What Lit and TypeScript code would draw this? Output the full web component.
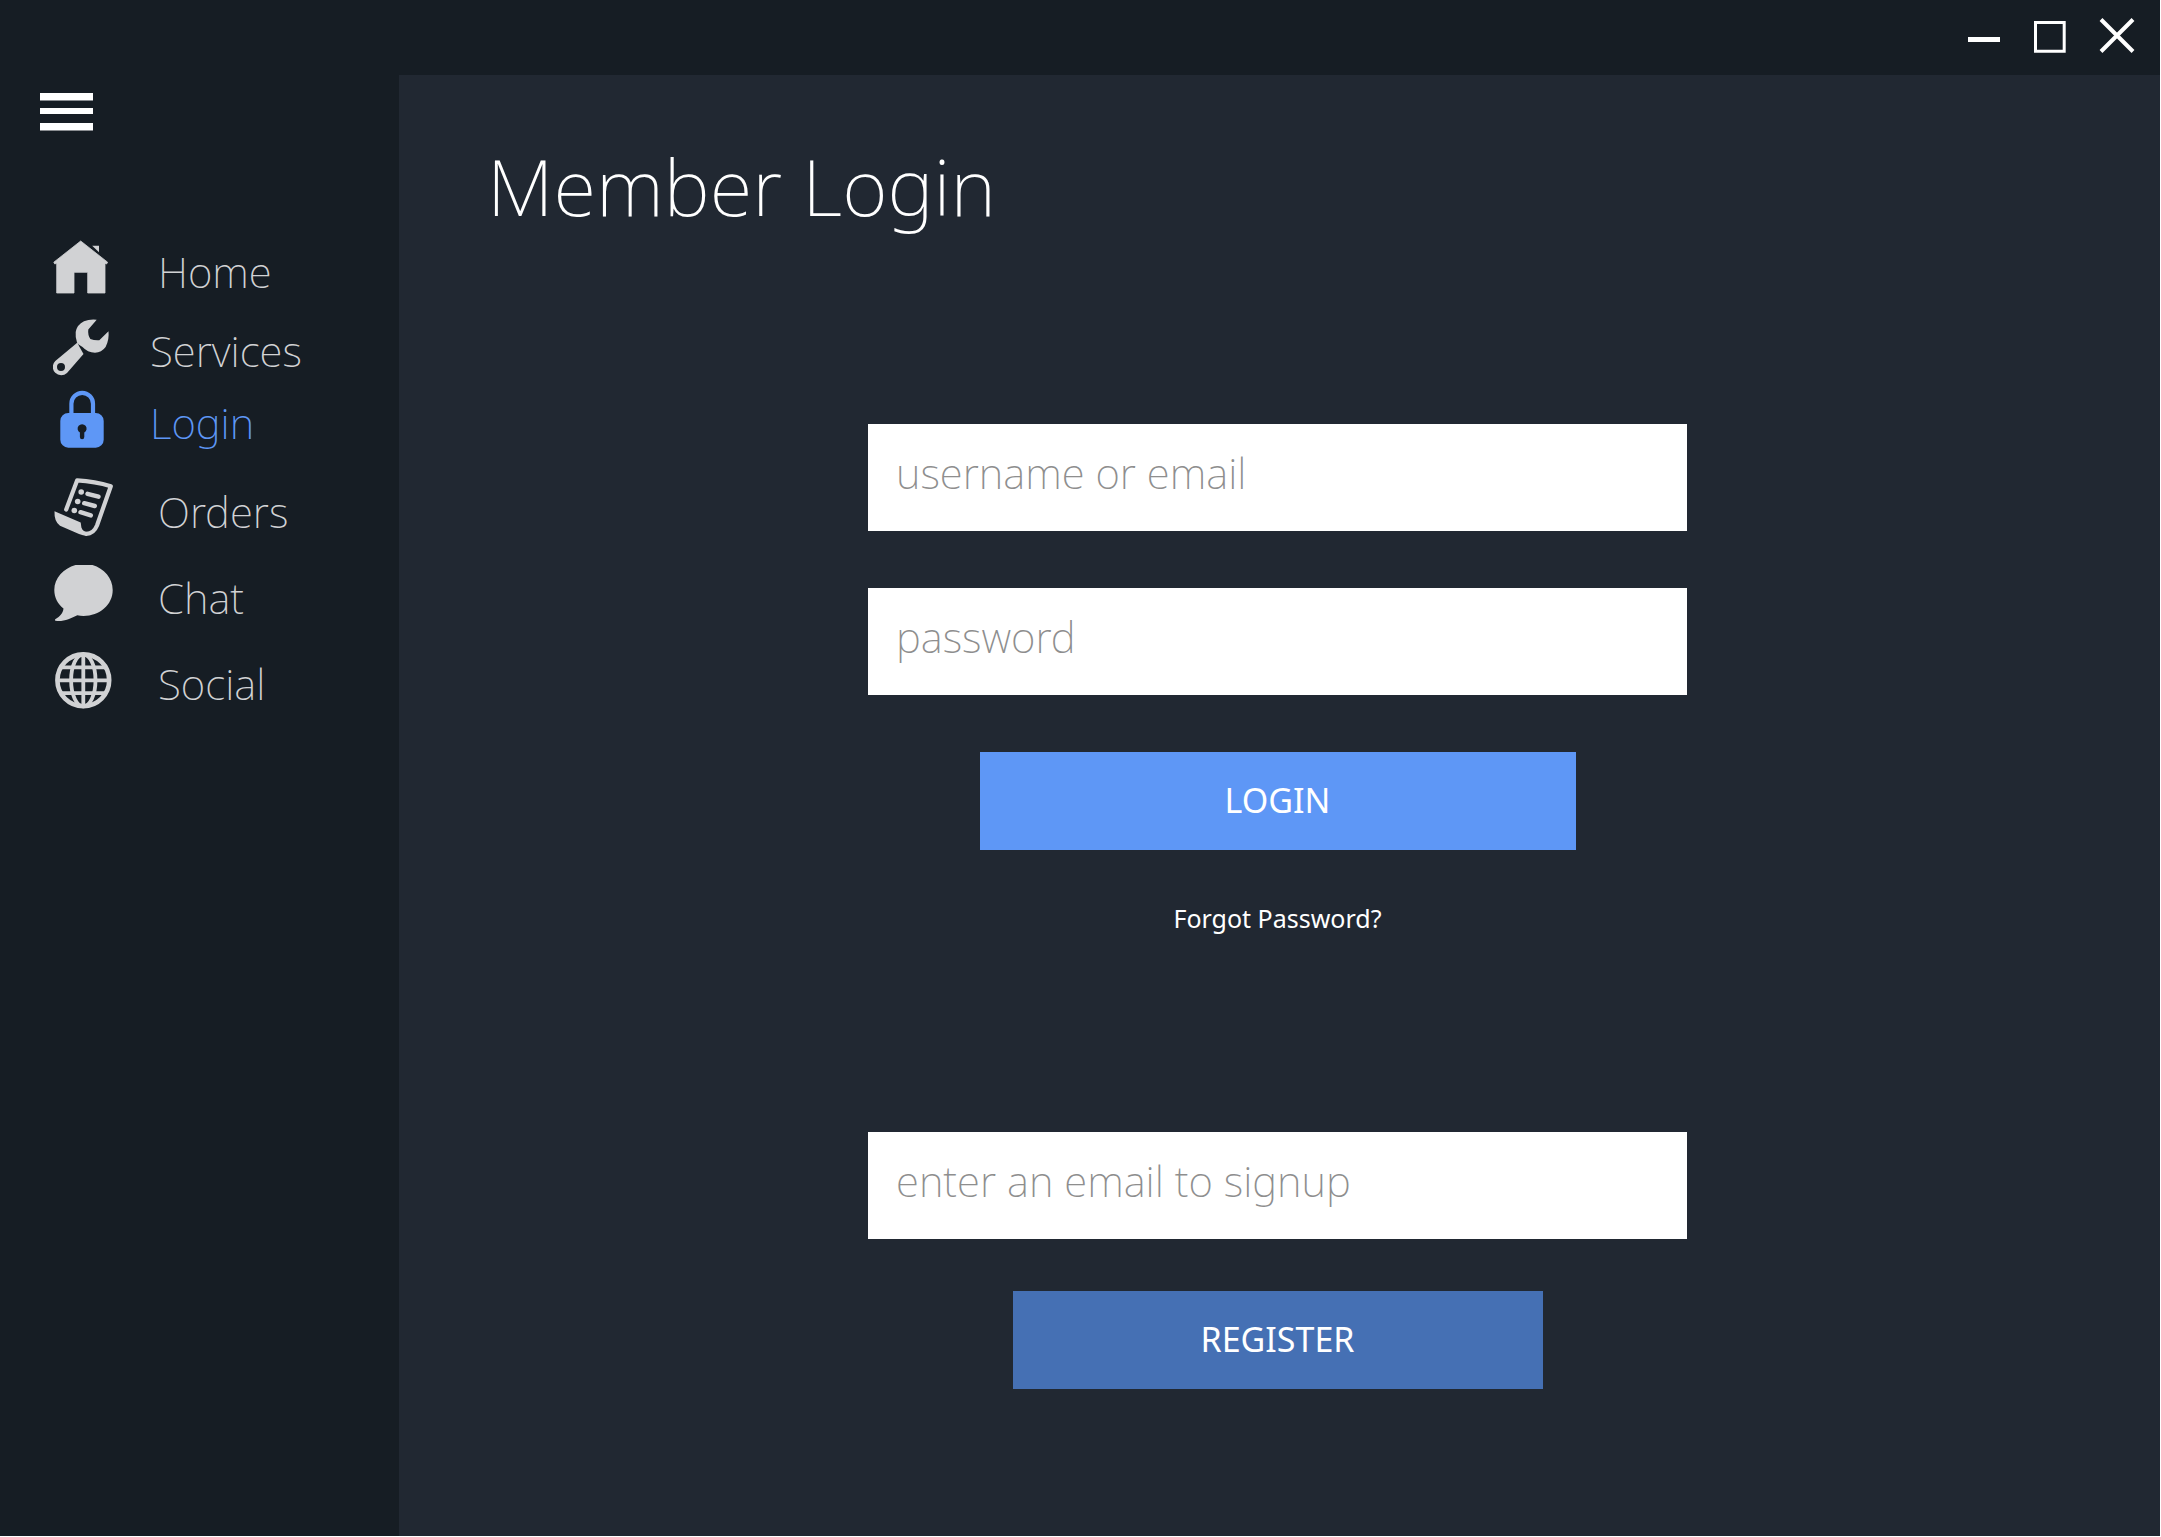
import { LitElement, html, svg, css, type TemplateResult } from "lit";
import { customElement, property, state } from "lit/decorators.js";
import { classMap } from "lit/directives/class-map.js";

interface NavItem {
  id: string;
  label: string;
  icon: TemplateResult;
  compact?: boolean;
}

const homeIcon = svg`
  <path d="M27.7 4 54.6 25.2 53.6 27 52 26.2V56H34.7V35.3H21V56H3.7V26.2L1.8 27 .8 25.2Z"
    fill="currentColor" stroke="currentColor" stroke-width=".8" stroke-linejoin="round" />
  <path d="M39.2 8.7H46V15.2Z" fill="currentColor" />`;

const wrenchIcon = svg`
  <path d="M43.7 3.7 35.3 13.5Q34.6 19 37.4 23 41.5 24.6 46.3 24.2L55.5 15.2Q56.4 23.5 52.6 31 48.5 36.7 42 36.7 34.5 36.5 29.5 31L26 28.8 24 26.5Q22.2 21.5 22.7 16 24 8.5 31 5.2 36.5 3 43.7 3.7Z" fill="currentColor" />
  <path fill-rule="evenodd" d="M24.5 26.5 26 30 30.5 38 14 56.9A8.3 8.3 0 1 1 2.3 45.1ZM8 46.9a4 4 0 1 0 0 8 4 4 0 1 0 0-8Z" fill="currentColor" />`;

const lockIcon = svg`
  <path d="M18.4 27V15.7a10.8 10.8 0 0 1 21.6 0V27" fill="none" stroke="currentColor" stroke-width="4.2" />
  <path fill-rule="evenodd" d="M15.3 25h27.4a8 8 0 0 1 8 8v18.7a8 8 0 0 1-8 8H15.3a8 8 0 0 1-8-8V33a8 8 0 0 1 8-8ZM26.9 44.6V49a2.2 2.2 0 0 0 4.4 0V44.6a4.5 4.5 0 1 0-4.4 0Z" fill="currentColor" />`;

const ordersIcon = svg`
  <g fill="none" stroke="currentColor" stroke-linecap="round" stroke-linejoin="round">
    <path d="M13.2 32.5 24.2 3.3Q42 4.2 57.8 9.2L44 48.5Q40.5 57 33 56.8" stroke-width="4.2" />
    <path d="M34.5 16.8 45.5 19.7M31.2 26.2 41.8 29M27.5 35.2 37.8 38.4" stroke-width="4.4" />
  </g>
  <g fill="currentColor">
    <circle cx="28.2" cy="15" r="2.8" />
    <circle cx="24.7" cy="24.5" r="2.8" />
    <circle cx="21.3" cy="33.5" r="2.8" />
    <path d="M1.5 34.3 27.7 45.5 28.4 50.5Q30 54.8 34 54.9V58.8Q30 58.8 26 57L7 48.8Q1 44.5 1.5 34.3Z" />
  </g>`;

const chatIcon = svg`
  <path d="M22.5 2H39.5C51 5.5 59.7 15 59.7 27 59.7 42 46.5 52.9 30.5 52.9 28.4 52.9 26.2 52.7 24.3 52.2 18 55.5 10 59 2.6 57.8 1.6 57.5 1.6 56.7 2.6 56.1 7 53.6 10 50 10.5 45.5 4.8 41 1.3 34.5 1.3 27 1.3 15 10.5 5.5 22.5 2Z" fill="currentColor" />`;

const globeIcon = svg`
  <g fill="none" stroke="currentColor" stroke-width="3.8">
    <circle cx="30.3" cy="31.3" r="25.9" stroke-width="4.6" />
    <ellipse cx="30.3" cy="31.3" rx="12.2" ry="26" />
    <path d="M30.3 5V57.5M4 31.3H56.6M8.5 18.4H52.1M8.5 44.2H52.1" />
  </g>`;

const mainItems: NavItem[] = [
  { id: "home", label: "Home", icon: homeIcon },
  { id: "services", label: "Services", icon: wrenchIcon, compact: true },
  { id: "login", label: "Login", icon: lockIcon, compact: true },
];

const accountItems: NavItem[] = [
  { id: "orders", label: "Orders", icon: ordersIcon },
  { id: "chat", label: "Chat", icon: chatIcon },
  { id: "social", label: "Social", icon: globeIcon },
];

@customElement("window-bar")
export class WindowBar extends LitElement {
  static styles = css`
    :host {
      display: flex;
      justify-content: flex-end;
      gap: 34px;
      padding: 17px 28px 0 0;
      height: 58px;
      background: #161d24;
    }
    .control {
      display: block;
      width: 32px;
      height: 36px;
      padding: 0;
      border: 0;
      background: none;
      color: #fff;
    }
    .glyph {
      display: block;
      overflow: visible;
      width: 32px;
      height: 36px;
      fill: none;
      stroke: currentColor;
    }
  `;

  render() {
    return html`
      <button class="control" type="button" aria-label="Minimize">
        <svg class="glyph" viewBox="0 0 32 36"><path d="M0 22.5H32" stroke-width="5" /></svg>
      </button>
      <button class="control" type="button" aria-label="Maximize">
        <svg class="glyph" viewBox="0 0 32 36"><path d="M1.5 5.5H30.2V34.2H1.5Z" stroke-width="3" /></svg>
      </button>
      <button class="control" type="button" aria-label="Close">
        <svg class="glyph" viewBox="0 0 32 36"><path d="M1 2.5 33 34.5M33 2.5 1 34.5" stroke-width="4" /></svg>
      </button>
    `;
  }
}

@customElement("side-nav")
export class SideNav extends LitElement {
  @property() current = "";

  static styles = css`
    :host {
      display: block;
      padding-top: 18px;
      background: #161d24;
    }
    .menu {
      display: block;
      margin: 0 0 93px 40px;
      padding: 0;
      border: 0;
      background: none;
      color: #fff;
    }
    .bars {
      display: block;
      width: 53px;
      height: 38px;
      fill: currentColor;
    }
    .nav {
      display: grid;
      gap: 10px;
    }
    .group {
      margin: 0;
      padding: 0;
      list-style: none;
    }
    .item {
      display: flex;
      align-items: center;
      gap: 45px;
      height: 86px;
      padding-left: 53px;
      color: #d1d2d4;
      font-size: 42px;
      line-height: 60px;
      font-weight: 200;
      text-decoration: none;
    }
    .compact {
      gap: 37px;
      height: 72px;
    }
    .current {
      color: #5e97f6;
    }
    .icon {
      display: block;
      flex: none;
      width: 60px;
      height: 60px;
    }
    .label {
      padding-top: 10px;
    }
  `;

  private renderGroup(items: NavItem[]) {
    return html`
      <ul class="group">
        ${items.map((item) => {
          const current = item.id === this.current;
          return html`
            <li>
              <a
                class=${classMap({ item: true, compact: !!item.compact, current })}
                href="#${item.id}"
                aria-current=${current ? "page" : "false"}
              >
                <svg class="icon" viewBox="0 0 60 60" aria-hidden="true">${item.icon}</svg>
                <span class="label">${item.label}</span>
              </a>
            </li>
          `;
        })}
      </ul>
    `;
  }

  render() {
    return html`
      <button class="menu" type="button" aria-label="Menu">
        <svg class="bars" viewBox="0 0 53 38">
          <path d="M0 0H53V7.5H0ZM0 15H53V21H0ZM0 30H53V37.5H0Z" />
        </svg>
      </button>
      <nav class="nav">${this.renderGroup(mainItems)}${this.renderGroup(accountItems)}</nav>
    `;
  }
}

@customElement("login-page")
export class LoginPage extends LitElement {
  static styles = css`
    :host {
      display: block;
      padding: 55px 92px 0 88px;
      background: #212832;
      color: #fff;
    }
    .title {
      margin: 0;
      font-size: 78px;
      line-height: 112px;
      font-weight: 200;
    }
    .form {
      display: flex;
      flex-direction: column;
      align-items: center;
      max-width: 819px;
      margin: 0 auto;
    }
    .signin {
      gap: 57px;
      padding-top: 182px;
    }
    .signup {
      gap: 52px;
      padding-top: 203px;
    }
    .field {
      box-sizing: border-box;
      width: 100%;
      height: 107px;
      padding: 0 28px 10px;
      border: 0;
      border-radius: 0;
      background: #fff;
      color: #333;
      font-family: inherit;
      font-size: 42px;
      font-weight: 200;
    }
    .field::placeholder {
      color: #8e8e8e;
      opacity: 1;
    }
    .button {
      width: 100%;
      height: 98px;
      padding: 0 0 2px;
      border: 0;
      color: #fff;
      font-family: inherit;
      font-size: 34px;
      font-weight: 400;
    }
    .primary {
      max-width: 596px;
      background: #5e97f6;
    }
    .secondary {
      max-width: 530px;
      background: #4570b4;
    }
    .forgot {
      color: inherit;
      font-size: 25px;
      line-height: 22px;
      text-decoration: none;
    }
  `;

  render() {
    return html`
      <h1 class="title">Member Login</h1>
      <form class="form signin" @submit=${(e: Event) => e.preventDefault()}>
        <input class="field" type="text" name="username" aria-label="username or email" placeholder="username or email" />
        <input class="field" type="password" name="password" aria-label="password" placeholder="password" />
        <button class="button primary" type="submit">LOGIN</button>
        <a class="forgot" href="#forgot">Forgot Password?</a>
      </form>
      <form class="form signup" @submit=${(e: Event) => e.preventDefault()}>
        <input class="field" type="email" name="email" aria-label="enter an email to signup" placeholder="enter an email to signup" />
        <button class="button secondary" type="submit">REGISTER</button>
      </form>
    `;
  }
}

@customElement("app-root")
export class AppRoot extends LitElement {
  @state() private current = "login";

  static styles = css`
    :host {
      display: grid;
      grid-template-columns: 399px 1fr;
      grid-template-rows: auto 1fr;
      box-sizing: border-box;
      min-height: 100vh;
      padding: 0 1px 1px 0;
      background: #fff;
      font-family: "Noto Sans", "Open Sans", sans-serif;
    }
    .bar {
      grid-column: 1 / -1;
    }
  `;

  render() {
    return html`
      <window-bar class="bar"></window-bar>
      <side-nav .current=${this.current}></side-nav>
      <login-page></login-page>
    `;
  }
}
